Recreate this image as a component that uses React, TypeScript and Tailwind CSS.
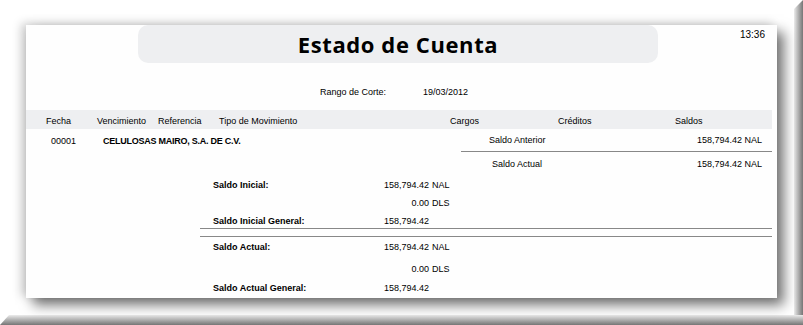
import React from "react";

const small = "font-['Liberation_Sans',Arial,sans-serif] text-[9px] text-black";

function Money({ value, cur }: { value: string; cur?: string }) {
  return (
    <div className="flex">
      <span className="w-[45px] text-right">{value}</span>
      {cur && <span className="ml-[3px]">{cur}</span>}
    </div>
  );
}

function SumRow({ label, value, cur, h }: { label?: string; value: string; cur?: string; h: string }) {
  return (
    <div className={`flex items-center pl-[13px] pt-[5px] ${h}`}>
      <span className="w-[171px] font-bold">{label}</span>
      <Money value={value} cur={cur} />
    </div>
  );
}

export default function App() {
  return (
    <div className="relative w-[803px] h-[325px] overflow-hidden bg-white">
      {/* bevel frame on the right and bottom */}
      <div className="absolute right-0 top-0 bottom-0 w-[9px] bg-gradient-to-r from-[#ececec] to-[#767676] [clip-path:polygon(0_9px,100%_0,100%_100%,0_100%)]" />
      <div className="absolute left-0 right-0 bottom-0 h-[10px] bg-gradient-to-b from-[#ececec] to-[#767676] [clip-path:polygon(9px_0,100%_0,100%_100%,0_100%)]" />

      <div className="pt-[25px] pl-[26px]">
        <div className={`relative w-[751px] h-[273px] bg-[#fefefe] shadow-[7px_7px_12px_rgba(0,0,0,0.55),-5px_-2px_9px_rgba(0,0,0,0.18)] ${small}`}>
          <div className="flex items-start">
            <div className="ml-[112px] w-[520px] h-[38px] rounded-[10px] bg-[#eeeff1] flex items-center justify-center">
              <span className="font-['Open_Sans',sans-serif] font-bold text-[22px] tracking-[0.6px] text-black">
                Estado de Cuenta
              </span>
            </div>
            <span className="ml-auto mr-[12px] mt-[2px] text-[10px]">13:36</span>
          </div>

          <div className="mt-[22px] h-[14px] flex items-center pl-[294px] pt-[2px]">
            <span className="w-[103px]">Rango de Corte:</span>
            <span>19/03/2012</span>
          </div>

          <div className="mt-[11px] mr-[5px] h-[19px] bg-[#eeeff1] flex items-center pl-[20px] pt-[4px]">
            <span className="w-[51px]">Fecha</span>
            <span className="w-[61px]">Vencimiento</span>
            <span className="w-[61px]">Referencia</span>
            <span className="w-[231px]">Tipo de Movimiento</span>
            <span className="w-[108px]">Cargos</span>
            <span className="w-[117px]">Créditos</span>
            <span>Saldos</span>
          </div>

          <div className="flex h-[23px]">
            <div className="w-[435px] flex items-center pl-[25px] pt-[2px]">
              <span className="w-[52px]">00001</span>
              <span className="font-bold tracking-[-0.25px]">CELULOSAS MAIRO, S.A. DE C.V.</span>
            </div>
            <div className="flex-1 mr-[5px] border-b border-[#888] flex items-center justify-between pl-[28px] pr-[10px] pt-[2px]">
              <span>Saldo Anterior</span>
              <span>158,794.42 NAL</span>
            </div>
          </div>
          <div className="flex h-[22px]">
            <div className="w-[435px]" />
            <div className="flex-1 mr-[5px] flex items-center justify-between pl-[31px] pr-[10px] pt-[4px]">
              <span>Saldo Actual</span>
              <span>158,794.42 NAL</span>
            </div>
          </div>

          <div className="ml-[174px] mr-[5px] border-b border-[#888]">
            <SumRow label="Saldo Inicial:" value="158,794.42" cur="NAL" h="h-[18px]" />
            <SumRow value="0.00" cur="DLS" h="h-[19px]" />
            <SumRow label="Saldo Inicial General:" value="158,794.42" h="h-[17px]" />
          </div>
          <div className="mt-[7px] ml-[174px] mr-[5px] border-t border-[#888]">
            <SumRow label="Saldo Actual:" value="158,794.42" cur="NAL" h="h-[17px]" />
            <SumRow value="0.00" cur="DLS" h="h-[27px]" />
            <SumRow label="Saldo Actual General:" value="158,794.42" h="h-[11px]" />
          </div>
        </div>
      </div>
    </div>
  );
}
